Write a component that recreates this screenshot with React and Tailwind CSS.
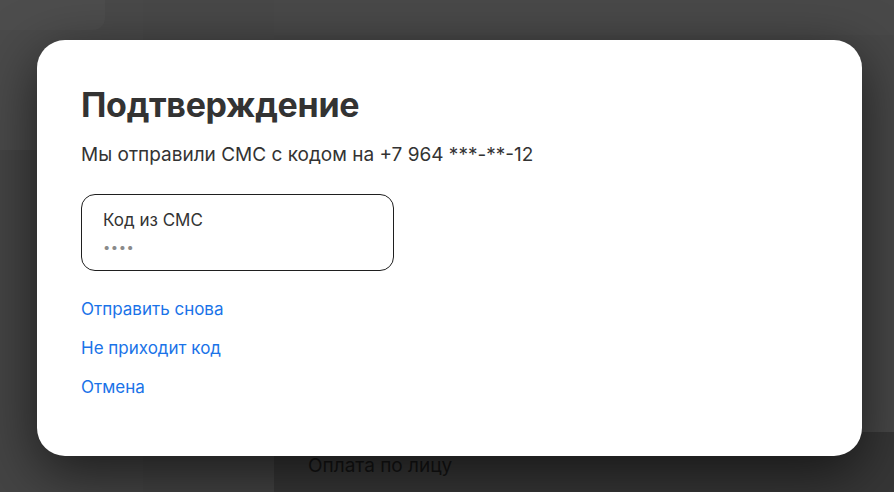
import React from 'react';

export default function App() {
  return (
    <div className="relative w-[894px] h-[492px] overflow-hidden bg-[#494949]" style={{ fontFamily: 'Inter, "Noto Sans", sans-serif' }}>
      {/* dimmed page behind the dialog */}
      <div className="flex h-full">
        <div className="w-[143px] flex flex-col">
          <div className="h-[30px] w-[105px] rounded-br-[12px] bg-[#4d4d4d]" />
          <div className="h-[120px] bg-[#4a4a4a]" />
          <div className="flex-1 bg-[#444444]" />
        </div>
        <div className="w-[131px] flex flex-col">
          <div className="h-[150px] bg-[#484848]" />
          <div className="flex-1 bg-[#424242]" />
        </div>
        <div className="flex-1 flex flex-col">
          <div className="h-[35px] bg-[#494949]" />
          <div className="flex-1 bg-[#474747]" />
          <div className="h-[60px] bg-[#363636] pl-[34px] pt-[20px]">
            <span className="text-[19px] text-[#141414]">Оплата по лицу</span>
          </div>
        </div>
      </div>

      {/* dialog */}
      <div className="absolute left-[37px] top-[40px] w-[825px] h-[416px] bg-white rounded-[28px] shadow-[0_16px_56px_rgba(0,0,0,0.6)] pl-[44px] pt-[45px]">
        <h1 className="text-[34px] leading-[40px] font-bold text-[#333333] tracking-[-0.3px]">Подтверждение</h1>
        <p className="mt-[18px] text-[19px] leading-[24px] text-[#333333]">Мы отправили СМС с кодом на +7 964 ***-**-12</p>

        <div className="mt-[27px] w-[313px] h-[77px] border border-[#1f1f1f] rounded-[14px] pl-[21px] pt-[13px]">
          <div className="text-[17px] leading-[24px] text-[#333333]">Код из СМС</div>
          <div className="mt-[7px] text-[13px] leading-[16px] text-[#8a8a8a] tracking-[0.5px]">••••</div>
        </div>

        <div className="mt-[28px] flex flex-col gap-[18px] text-[17px] leading-[21px] text-[#1a73e8]">
          <a href="#" className="w-fit">Отправить снова</a>
          <a href="#" className="w-fit">Не приходит код</a>
          <a href="#" className="w-fit">Отмена</a>
        </div>
      </div>
    </div>
  );
}
